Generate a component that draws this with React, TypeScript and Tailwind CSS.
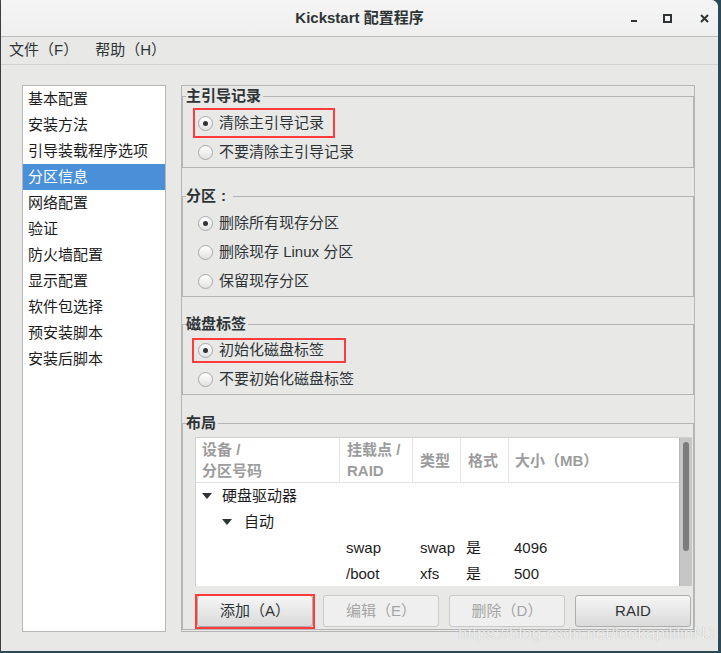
import React from 'react';

const navItems = [
  '基本配置',
  '安装方法',
  '引导装载程序选项',
  '分区信息',
  '网络配置',
  '验证',
  '防火墙配置',
  '显示配置',
  '软件包选择',
  '预安装脚本',
  '安装后脚本',
];

const Radio: React.FC<{ checked?: boolean; label: string; mark?: string }> = ({ checked, label, mark }) => (
  <div className="relative h-[29px] flex items-center pl-[15px]">
    <span className="w-[15px] h-[15px] rounded-full border border-[#a9a9a9] bg-linear-to-b from-white to-[#e2e2e2] flex items-center justify-center shrink-0">
      {checked && <span className="w-[5px] h-[5px] rounded-full bg-[#2e3436]" />}
    </span>
    <span className="ml-[6px] text-[15px] text-[#2e3436]">{label}</span>
    {mark && <span className={`absolute border-2 border-[#ff3b3b] ${mark}`} />}
  </div>
);

const Section: React.FC<{ title: React.ReactNode; className?: string; children: React.ReactNode }> = ({ title, className, children }) => (
  <fieldset className={`border border-[#b4b4b4] ${className || ''}`}>
    <legend className="ml-[3px] pr-[2px] text-[15px] leading-[20px] font-bold text-[#2e3436]">{title}</legend>
    {children}
  </fieldset>
);

const Tri = () => (
  <svg width="10" height="6" viewBox="0 0 10 6" className="shrink-0">
    <polygon points="0,0 10,0 5,6" fill="#2e3436" />
  </svg>
);

const cols = 'grid grid-cols-[144px_73px_48px_48px_170px]';

export default function App() {
  return (
    <div className="relative w-[721px] h-[653px] bg-[#2c4a56] overflow-hidden font-['Liberation_Sans','Noto_Sans_CJK_SC',sans-serif]">
      <div className="w-[718px] h-[651px] bg-[#e8e8e7] rounded-tr-[7px] rounded-tl-[3px] border-l border-[#3b3f42] flex flex-col">
        {/* title bar */}
        <div className="relative h-[37px] shrink-0 bg-linear-to-b from-[#f5f5f5] to-[#efefef] border-b border-[#bdbdbd] rounded-tr-[7px] flex items-center justify-center">
          <span className="text-[15px] text-[#2e3436] font-semibold">Kickstart 配置程序</span>
          <div className="absolute right-[9px] top-0 h-[36px] flex items-center">
            <svg width="8" height="8" viewBox="0 0 8 8"><rect x="1" y="6" width="6" height="2" fill="#2e3436" /></svg>
            <svg width="9" height="9" viewBox="0 0 9 9" className="ml-[25px]"><rect x="1" y="1" width="7" height="7" fill="none" stroke="#2e3436" strokeWidth="2" /></svg>
            <svg width="9" height="9" viewBox="0 0 9 9" className="ml-[28px]"><path d="M1 1 L8 8 M8 1 L1 8" stroke="#2e3436" strokeWidth="2" /></svg>
          </div>
        </div>
        {/* menu bar */}
        <div className="h-[28px] shrink-0 border-b border-[#d2d2d2] flex items-center pl-[8px] text-[15px] text-[#2e3436]">
          <span>文件（F）</span>
          <span className="ml-[17px]">帮助（H）</span>
        </div>
        {/* body */}
        <div className="flex pt-[20px]">
          <div className="ml-[21px] w-[144px] h-[547px] bg-white border border-[#b6b6b6]">
            {navItems.map((item, i) => (
              <div
                key={item}
                className={`h-[26px] flex items-center pl-[5px] text-[15px] ${i === 3 ? 'bg-[#4a90d9] text-white' : 'text-[#1c1c1c]'}`}
              >
                {item}
              </div>
            ))}
          </div>
          <div className="ml-[15px] w-[514px] h-[547px] border border-[#b6b6b6] overflow-hidden">
            <Section title="主引导记录" className="pt-[3px]">
              <Radio checked label="清除主引导记录" mark="left-[10px] w-[142px] -top-[1px] h-[30px]" />
              <Radio label="不要清除主引导记录" />
            </Section>
            <Section
              title={
                <>
                  分区<span className="inline-block w-[15px] text-center">:</span>
                </>
              }
              className="mt-[18px] pt-[3px]"
            >
              <Radio checked label="删除所有现存分区" />
              <Radio label="删除现存 Linux 分区" />
              <Radio label="保留现存分区" />
            </Section>
            <Section title="磁盘标签" className="mt-[17px] pt-[2px]">
              <Radio checked label="初始化磁盘标签" mark="left-[9px] w-[154px] top-[2px] h-[25px]" />
              <Radio label="不要初始化磁盘标签" />
            </Section>
            <Section title="布局" className="mt-[18px] pt-[4px] pb-[2px]">
              <div className="ml-[12px] w-[497px] h-[149px] border-l border-t border-[#d0d0d0] bg-white flex">
                <div className="w-[483px] h-[148px] overflow-hidden">
                  <div className={`${cols} h-[45px] border-b border-[#e2e2e2] text-[15px] font-bold text-[#9c9c9c] leading-[21px]`}>
                    <div className="pl-[6px] pt-[1px] border-r border-[#e2e2e2]">设备 /<br />分区号码</div>
                    <div className="pl-[7px] pt-[1px] border-r border-[#e2e2e2]">挂载点 /<br />RAID</div>
                    <div className="pl-[7px] flex items-center border-r border-[#e2e2e2]">类型</div>
                    <div className="pl-[7px] flex items-center border-r border-[#e2e2e2]">格式</div>
                    <div className="pl-[6px] flex items-center">大小（MB）</div>
                  </div>
                  <div className="text-[15px] text-[#1c1c1c]">
                    <div className="h-[26px] flex items-center pl-[6px]">
                      <Tri />
                      <span className="ml-[10px]">硬盘驱动器</span>
                    </div>
                    <div className="h-[26px] flex items-center pl-[26px]">
                      <Tri />
                      <span className="ml-[12px]">自动</span>
                    </div>
                    {[
                      ['swap', 'swap', '是', '4096'],
                      ['/boot', 'xfs', '是', '500'],
                    ].map((r) => (
                      <div key={r[0]} className={`${cols} h-[26px] items-center`}>
                        <div />
                        <div className="pl-[6px]">{r[0]}</div>
                        <div className="pl-[7px]">{r[1]}</div>
                        <div className="pl-[5px]">{r[2]}</div>
                        <div className="pl-[5px]">{r[3]}</div>
                      </div>
                    ))}
                  </div>
                </div>
                <div className="w-[13px] h-[148px] bg-[#c6c6c6] border-l border-[#b9b9b9] flex justify-center pt-[4px]">
                  <div className="w-[6px] h-[109px] rounded-full bg-[#7c7c7c]" />
                </div>
              </div>
              <div className="mt-[9px] pl-[14px] flex gap-[10px] text-[15px]">
                <div className="relative">
                  <button className="w-[116px] h-[32px] rounded-[3px] border border-[#adadad] bg-linear-to-b from-[#f6f6f6] to-[#dadada] text-[#2e3436]">
                    添加（A）
                  </button>
                  <span className="absolute -left-[2px] -right-[2px] -top-[1px] -bottom-[2px] border-2 border-[#ff3b3b]" />
                </div>
                <button className="w-[116px] h-[32px] rounded-[3px] border border-[#c9c9c9] bg-[#efefef] text-[#a4a4a4]">编辑（E）</button>
                <button className="w-[116px] h-[32px] rounded-[3px] border border-[#c9c9c9] bg-[#efefef] text-[#a4a4a4]">删除（D）</button>
                <button className="w-[116px] h-[32px] rounded-[3px] border border-[#adadad] bg-linear-to-b from-[#f6f6f6] to-[#dadada] text-[#2e3436]">RAID</button>
              </div>
            </Section>
          </div>
        </div>
      </div>
      <span className="absolute left-[458px] top-[621px] text-[17px] text-white/80 whitespace-nowrap [text-shadow:0_0_1px_rgba(0,0,0,0.3)]">
        https://blog.csdn.net/lookapililinNJ
      </span>
    </div>
  );
}
